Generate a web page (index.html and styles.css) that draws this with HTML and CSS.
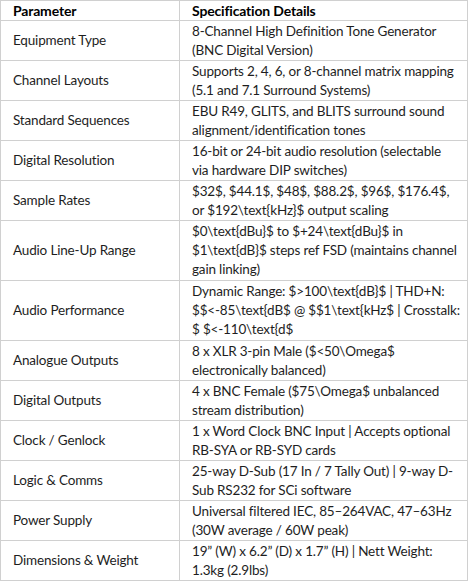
FILE: index.html
```html
<!DOCTYPE html>
<html>
<head>
<meta charset="utf-8">
<link rel="stylesheet" href="styles.css">
</head>
<body>
<table class="spec">
<thead>
<tr><th class="param">Parameter</th><th class="detail">Specification Details</th></tr>
</thead>
<tbody>
<tr><td class="param">Equipment Type</td><td class="detail">8-Channel High Definition Tone Generator<br>(BNC Digital Version)</td></tr>
<tr><td class="param">Channel Layouts</td><td class="detail">Supports 2, 4, 6, or 8-channel matrix mapping<br>(5.1 and 7.1 Surround Systems)</td></tr>
<tr><td class="param">Standard Sequences</td><td class="detail">EBU R49, GLITS, and BLITS surround sound<br>alignment/identification tones</td></tr>
<tr><td class="param">Digital Resolution</td><td class="detail">16-bit or 24-bit audio resolution (selectable<br>via hardware DIP switches)</td></tr>
<tr><td class="param">Sample Rates</td><td class="detail">$32$, $44.1$, $48$, $88.2$, $96$, $176.4$,<br>or $192\text{kHz}$ output scaling</td></tr>
<tr class="tall"><td class="param">Audio Line-Up Range</td><td class="detail">$0\text{dBu}$ to $+24\text{dBu}$ in<br>$1\text{dB}$ steps ref FSD (maintains channel<br>gain linking)</td></tr>
<tr class="tall"><td class="param">Audio Performance</td><td class="detail">Dynamic Range: $&gt;100\text{dB}$ | THD+N:<br>$$&lt;-85\text{dB$ @ $$1\text{kHz$ | Crosstalk:<br>$ $&lt;-110\text{d$</td></tr>
<tr><td class="param">Analogue Outputs</td><td class="detail">8 x XLR 3-pin Male ($&lt;50\Omega$<br>electronically balanced)</td></tr>
<tr><td class="param">Digital Outputs</td><td class="detail">4 x BNC Female ($75\Omega$ unbalanced<br>stream distribution)</td></tr>
<tr><td class="param">Clock / Genlock</td><td class="detail">1 x Word Clock BNC Input | Accepts optional<br>RB-SYA or RB-SYD cards</td></tr>
<tr><td class="param">Logic &amp; Comms</td><td class="detail">25-way D-Sub (17 In / 7 Tally Out) | 9-way D-<br>Sub RS232 for SCi software</td></tr>
<tr><td class="param">Power Supply</td><td class="detail">Universal filtered IEC, 85–264VAC, 47–63Hz<br>(30W average / 60W peak)</td></tr>
<tr><td class="param">Dimensions &amp; Weight</td><td class="detail">19” (W) x 6.2” (D) x 1.7” (H) | Nett Weight:<br>1.3kg (2.9lbs)</td></tr>
</tbody>
</table>
</body>
</html>
```
FILE: styles.css
```css
html, body {
  margin: 0;
  padding: 0;
  background: #ffffff;
}
.spec {
  border-collapse: collapse;
  width: 468px;
  table-layout: fixed;
  font-family: Lato, "Liberation Sans", sans-serif;
  font-size: 13.5px;
  letter-spacing: -0.17px;
  color: #1e1e1e;
}
.spec th, .spec td {
  border: 1px solid #d0d0d0;
  padding: 0 4px 0 12px;
  text-align: left;
  white-space: nowrap;
  overflow: hidden;
}
.spec th {
  font-weight: 700;
  color: #000;
  line-height: 19px;
  height: 19px;
  font-size: 14px;
}
.spec td {
  line-height: 19px;
  height: 39px;
}
.spec td.detail {
  vertical-align: top;
  padding-top: 1px;
  height: 38px;
}
.spec tr.tall td {
  height: 59px;
}
.spec tr.tall td.detail {
  height: 58px;
}
.spec .param {
  width: 162px;
  vertical-align: middle;
}
```
